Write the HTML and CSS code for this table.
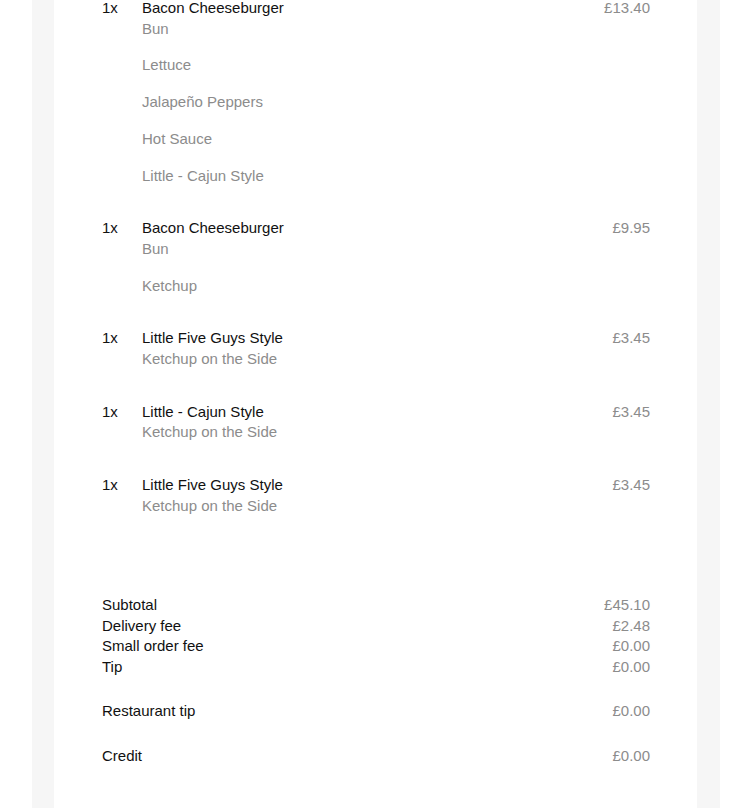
FILE: index.html
```html
<!DOCTYPE html>
<html>
<head>
<meta charset="utf-8">
<link rel="stylesheet" href="styles.css">
</head>
<body>
<div class="page">
  <div class="card">
    <div class="items">
      <div class="item">
        <div class="qty">1x</div>
        <div class="details">
          <div class="name">Bacon Cheeseburger</div>
          <div class="mods">
            <div class="mod">Bun</div>
            <div class="mod">Lettuce</div>
            <div class="mod">Jalapeño Peppers</div>
            <div class="mod">Hot Sauce</div>
            <div class="mod">Little - Cajun Style</div>
          </div>
        </div>
        <div class="price">£13.40</div>
      </div>
      <div class="item">
        <div class="qty">1x</div>
        <div class="details">
          <div class="name">Bacon Cheeseburger</div>
          <div class="mods">
            <div class="mod">Bun</div>
            <div class="mod">Ketchup</div>
          </div>
        </div>
        <div class="price">£9.95</div>
      </div>
      <div class="item">
        <div class="qty">1x</div>
        <div class="details">
          <div class="name">Little Five Guys Style</div>
          <div class="mods">
            <div class="mod">Ketchup on the Side</div>
          </div>
        </div>
        <div class="price">£3.45</div>
      </div>
      <div class="item">
        <div class="qty">1x</div>
        <div class="details">
          <div class="name">Little - Cajun Style</div>
          <div class="mods">
            <div class="mod">Ketchup on the Side</div>
          </div>
        </div>
        <div class="price">£3.45</div>
      </div>
      <div class="item">
        <div class="qty">1x</div>
        <div class="details">
          <div class="name">Little Five Guys Style</div>
          <div class="mods">
            <div class="mod">Ketchup on the Side</div>
          </div>
        </div>
        <div class="price">£3.45</div>
      </div>
    </div>
    <div class="totals">
      <div class="group">
        <div class="row"><span class="label">Subtotal</span><span class="amount">£45.10</span></div>
        <div class="row"><span class="label">Delivery fee</span><span class="amount">£2.48</span></div>
        <div class="row"><span class="label">Small order fee</span><span class="amount">£0.00</span></div>
        <div class="row"><span class="label">Tip</span><span class="amount">£0.00</span></div>
      </div>
      <div class="group">
        <div class="row"><span class="label">Restaurant tip</span><span class="amount">£0.00</span></div>
      </div>
      <div class="group">
        <div class="row"><span class="label">Credit</span><span class="amount">£0.00</span></div>
      </div>
    </div>
  </div>
</div>
</body>
</html>
```
FILE: styles.css
```css
html, body {
  margin: 0;
  padding: 0;
  background: #ffffff;
}
body {
  font-family: "Liberation Sans", Arial, Helvetica, sans-serif;
  font-size: 15px;
  line-height: 20.7px;
  color: #111111;
}
.page {
  width: 643px;
  margin-left: 32px;
  padding: 0 23px 0 22px;
  background: #f6f6f6;
  min-height: 808px;
}
.card {
  background: #ffffff;
  padding: 0 47px 60px 48px;
  min-height: 808px;
  margin-top: -2px;
}
.items {
  display: flex;
  flex-direction: column;
  gap: 32px;
}
.item {
  display: flex;
  align-items: flex-start;
}
.qty {
  width: 40px;
  flex: none;
}
.details {
  flex: 1;
}
.mods {
  display: flex;
  flex-direction: column;
  gap: 16px;
}
.mod {
  color: #8c8c8c;
}
.price {
  color: #8c8c8c;
  text-align: right;
}
.totals {
  margin-top: 78.5px;
  display: flex;
  flex-direction: column;
  gap: 23.5px;
}
.row {
  display: flex;
  justify-content: space-between;
}
.amount {
  color: #8c8c8c;
}
```
